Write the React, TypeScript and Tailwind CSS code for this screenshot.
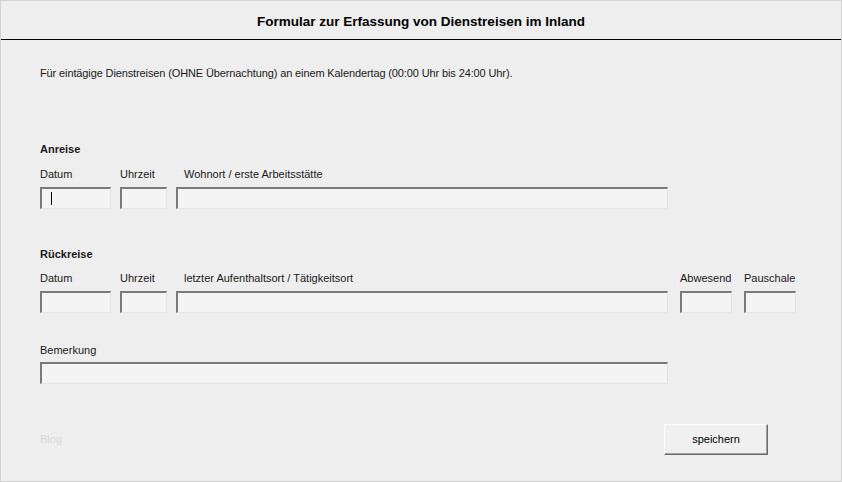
import React from "react";

const font = { fontFamily: '"Liberation Sans", Arial, sans-serif' };

function Box({ w, caret }: { w: string; caret?: boolean }) {
  return (
    <div
      className={`${w} h-[22px] bg-[#f4f4f4] border-t-2 border-l-2 border-r border-b border-t-[#7a7a7a] border-l-[#7a7a7a] border-r-[#e4e4e4] border-b-[#e4e4e4] flex items-center`}
    >
      {caret && <div className="ml-[9px] w-px h-[13px] bg-black" />}
    </div>
  );
}

function Field({
  label,
  w,
  col,
  indent,
  caret,
}: {
  label: string;
  w: string;
  col: string;
  indent?: boolean;
  caret?: boolean;
}) {
  return (
    <div className={`${col} shrink-0 flex flex-col`}>
      <div className={`h-[14px] leading-[14px] ${indent ? "pl-2" : ""}`}>{label}</div>
      <div className="mt-[6px]">
        <Box w={w} caret={caret} />
      </div>
    </div>
  );
}

export default function App() {
  return (
    <div
      className="w-[842px] h-[482px] bg-[#eeeeee] border border-[#d2d2d2] flex flex-col text-[11px] text-[#1a1a1a] overflow-hidden"
      style={font}
    >
      <div className="h-[39px] border-b border-black flex items-center justify-center pt-[5px]">
        <h1 className="text-[13.5px] font-bold text-black">
          Formular zur Erfassung von Dienstreisen im Inland
        </h1>
      </div>

      <div className="px-[39px] flex flex-col">
        <p className="mt-[26px] h-[14px] leading-[14px] tracking-[-0.12px]">
          Für eintägige Dienstreisen (OHNE Übernachtung) an einem Kalendertag (00:00 Uhr bis 24:00 Uhr).
        </p>

        <h2 className="mt-[62px] h-[14px] leading-[14px] font-bold">Anreise</h2>
        <div className="mt-[11px] flex">
          <Field label="Datum" col="w-[80px]" w="w-[71px]" caret />
          <Field label="Uhrzeit" col="w-[56px]" w="w-[47px]" />
          <Field label="Wohnort / erste Arbeitsstätte" col="w-[504px]" w="w-[492px]" indent />
        </div>

        <h2 className="mt-[38px] h-[14px] leading-[14px] font-bold">Rückreise</h2>
        <div className="mt-[10px] flex">
          <Field label="Datum" col="w-[80px]" w="w-[71px]" />
          <Field label="Uhrzeit" col="w-[56px]" w="w-[47px]" />
          <Field label="letzter Aufenthaltsort / Tätigkeitsort" col="w-[504px]" w="w-[492px]" indent />
          <Field label="Abwesend" col="w-[64px]" w="w-[52px]" />
          <Field label="Pauschale" col="w-[58px]" w="w-[52px]" />
        </div>

        <div className="mt-[30px] flex flex-col">
          <div className="h-[14px] leading-[14px]">Bemerkung</div>
          <div className="mt-[5px]">
            <Box w="w-[628px]" />
          </div>
        </div>

        <div className="mt-[40px] flex items-center justify-between w-[728px]">
          <span className="text-[#d8d8d8]">Blog</span>
          <button className="w-[104px] h-[31px] bg-[#f0f0f0] border border-t-white border-l-white border-r-[#6b6b6b] border-b-[#6b6b6b] shadow-[inset_-1px_-1px_0_#a0a0a0] text-[11px] text-black">
            speichern
          </button>
        </div>
      </div>
    </div>
  );
}
